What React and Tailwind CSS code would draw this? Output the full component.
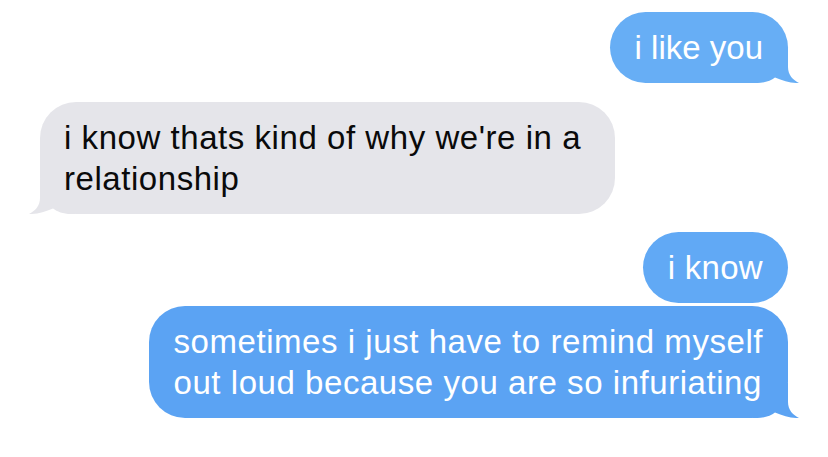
import React from 'react'

const Tail = ({ color, left = false }) => (
    <svg
        width="46"
        height="35"
        viewBox="0 0 46 35"
        className={
            left
                ? 'absolute bottom-0 left-[-11px] -scale-x-100'
                : 'absolute bottom-0 right-[-11px]'
        }
    >
        <path
            d="M0 0 L35 0 L35 19 C35 27 40 32 46 35 C38 35.3 30 33 22 29.5 C18 32.5 12 35 4 35 L0 35 Z"
            fill={color}
        />
    </svg>
)

const Bubble = ({ children, color, text, tail, left, className = '' }) => (
    <div
        className={`relative rounded-[36px] py-[15px] px-[25px] text-[33px] leading-[41px] ${text} ${className}`}
        style={{ backgroundColor: color }}
    >
        {tail && <Tail color={color} left={left} />}
        <div className="relative">{children}</div>
    </div>
)

const App = () => {
    return (
        <div
            className="w-[828px] h-[457px] bg-white overflow-hidden px-[40px] pt-[12px] flex flex-col"
            style={{ fontFamily: '"Liberation Sans", Arial, sans-serif' }}
        >
            <div className="flex justify-end">
                <Bubble
                    color="#67aef5"
                    text="text-white"
                    tail
                    className="px-[24px] tracking-[0px]"
                >
                    i like you
                </Bubble>
            </div>

            <div className="flex justify-start mt-[19px]">
                <Bubble
                    color="#e5e5ea"
                    text="text-[#0a0a0a]"
                    tail
                    left
                    className="w-[575px] pl-[24px] tracking-[0.55px]"
                >
                    i know thats kind of why we're in a
                    <br />
                    relationship
                </Bubble>
            </div>

            <div className="flex justify-end mt-[18px]">
                <Bubble color="#61a9f5" text="text-white" className="tracking-[0.3px]">
                    i know
                </Bubble>
            </div>

            <div className="flex justify-end mt-[3px]">
                <Bubble
                    color="#5ba3f3"
                    text="text-white"
                    tail
                    className="tracking-[0.55px]"
                >
                    sometimes i just have to remind myself
                    <br />
                    out loud because you are so infuriating
                </Bubble>
            </div>
        </div>
    )
}

export default App
